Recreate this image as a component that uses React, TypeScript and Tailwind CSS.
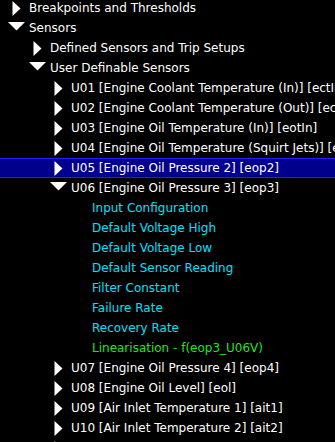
type Row = {
  label: string;
  level: number;
  arrow?: "right" | "down";
  tone?: "white" | "cyan" | "green";
  selected?: boolean;
};

const rows: Row[] = [
  { label: "Breakpoints and Thresholds", level: 0, arrow: "right" },
  { label: "Sensors", level: 0, arrow: "down" },
  { label: "Defined Sensors and Trip Setups", level: 1, arrow: "right" },
  { label: "User Definable Sensors", level: 1, arrow: "down" },
  { label: "U01 [Engine Coolant Temperature (In)] [ectIn]", level: 2, arrow: "right" },
  { label: "U02 [Engine Coolant Temperature (Out)] [ectOut]", level: 2, arrow: "right" },
  { label: "U03 [Engine Oil Temperature (In)] [eotIn]", level: 2, arrow: "right" },
  { label: "U04 [Engine Oil Temperature (Squirt Jets)] [eotSj]", level: 2, arrow: "right" },
  { label: "U05 [Engine Oil Pressure 2] [eop2]", level: 2, arrow: "right", selected: true },
  { label: "U06 [Engine Oil Pressure 3] [eop3]", level: 2, arrow: "down" },
  { label: "Input Configuration", level: 3, tone: "cyan" },
  { label: "Default Voltage High", level: 3, tone: "cyan" },
  { label: "Default Voltage Low", level: 3, tone: "cyan" },
  { label: "Default Sensor Reading", level: 3, tone: "cyan" },
  { label: "Filter Constant", level: 3, tone: "cyan" },
  { label: "Failure Rate", level: 3, tone: "cyan" },
  { label: "Recovery Rate", level: 3, tone: "cyan" },
  { label: "Linearisation - f(eop3_U06V)", level: 3, tone: "green" },
  { label: "U07 [Engine Oil Pressure 4] [eop4]", level: 2, arrow: "right" },
  { label: "U08 [Engine Oil Level] [eol]", level: 2, arrow: "right" },
  { label: "U09 [Air Inlet Temperature 1] [ait1]", level: 2, arrow: "right" },
  { label: "U10 [Air Inlet Temperature 2] [ait2]", level: 2, arrow: "right" },
  // next row only peeks in at the bottom edge
  { label: "", level: 2, arrow: "right" },
];

const toneClass = {
  white: "text-white",
  cyan: "text-[#00e1ff]",
  green: "text-[#1ee61e]",
};

function Arrow({ dir }: { dir: "right" | "down" }) {
  if (dir === "down") {
    return (
      <svg width="17" height="9" viewBox="0 0 17 9" className="mb-[4px]">
        <polygon points="0,0 17,0 8.5,8.5" fill="#fff" />
      </svg>
    );
  }
  return (
    <svg width="9" height="15" viewBox="0 0 9 15" className="mt-[1px]">
      <polygon points="0.5,0 8.5,7.5 0.5,15" fill="#fff" />
    </svg>
  );
}

function indent(level: number) {
  return ["pl-0", "pl-[21px]", "pl-[42px]", "pl-[63px]"][level];
}

export default function App() {
  return (
    <div className="h-[442px] w-[335px] overflow-hidden bg-black font-['DejaVu_Sans',Verdana,sans-serif] text-[12px]">
      <div className="-mt-[2px] flex flex-col">
        {rows.map((row, i) => (
          <div
            key={i}
            className={`flex h-[20px] items-center whitespace-nowrap ${indent(row.level)} ${
              row.selected ? "border-y border-[#2020ff] bg-[#00008c]" : ""
            }`}
          >
            <div className="ml-[8px] flex h-full w-[21px] shrink-0 items-center">
              <div className="flex w-[17px] justify-center">{row.arrow ? <Arrow dir={row.arrow} /> : null}</div>
            </div>
            {row.label ? (
              <span className={`${toneClass[row.tone ?? "white"]} leading-none`}>{row.label}</span>
            ) : null}
          </div>
        ))}
      </div>
    </div>
  );
}
